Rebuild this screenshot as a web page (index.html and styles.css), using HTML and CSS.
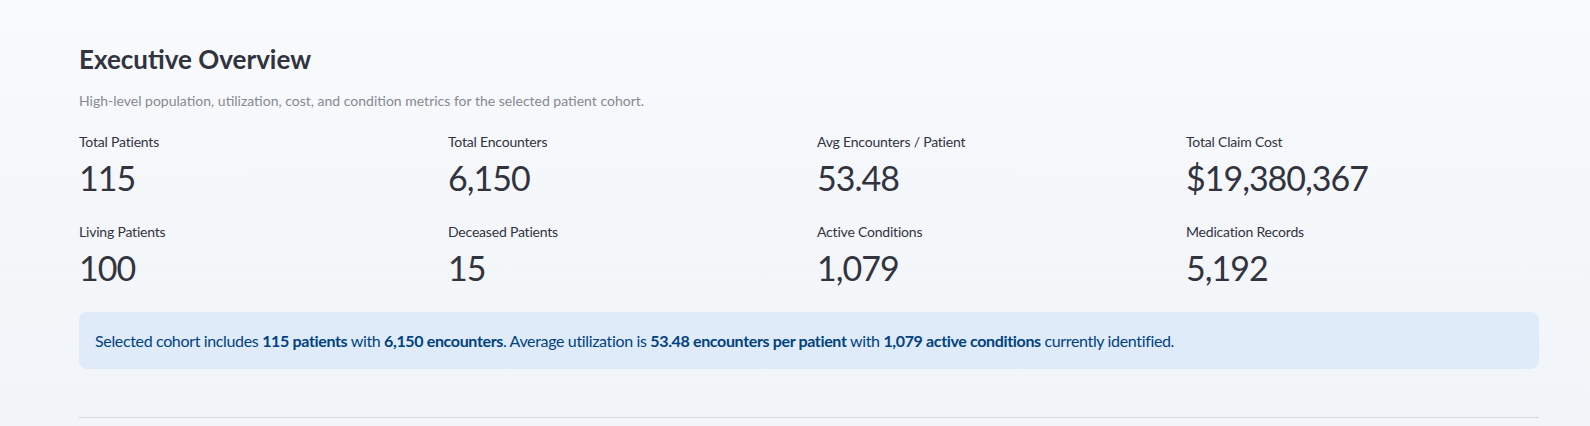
FILE: index.html
```html
<!DOCTYPE html>
<html lang="en">
<head>
  <meta charset="UTF-8">
  <meta name="viewport" content="width=device-width, initial-scale=1.0">
  <title>Executive Overview</title>
  <link rel="stylesheet" href="styles.css">
</head>
<body>

  <main class="main">
    <!-- Section header -->
    <h3 class="title">Executive Overview</h3>
    <p class="caption">High-level population, utilization, cost, and condition metrics for the selected patient cohort.</p>

    <!-- KPI grid -->
    <div class="metrics">
      <div class="metric">
        <div class="metric-label">Total Patients</div>
        <div class="metric-value">115</div>
      </div>
      <div class="metric">
        <div class="metric-label">Total Encounters</div>
        <div class="metric-value">6,150</div>
      </div>
      <div class="metric">
        <div class="metric-label">Avg Encounters / Patient</div>
        <div class="metric-value">53.48</div>
      </div>
      <div class="metric">
        <div class="metric-label">Total Claim Cost</div>
        <div class="metric-value">$19,380,367</div>
      </div>
      <div class="metric">
        <div class="metric-label">Living Patients</div>
        <div class="metric-value">100</div>
      </div>
      <div class="metric">
        <div class="metric-label">Deceased Patients</div>
        <div class="metric-value">15</div>
      </div>
      <div class="metric">
        <div class="metric-label">Active Conditions</div>
        <div class="metric-value">1,079</div>
      </div>
      <div class="metric">
        <div class="metric-label">Medication Records</div>
        <div class="metric-value">5,192</div>
      </div>
    </div>

    <!-- Summary -->
    <div class="alert">
      Selected cohort includes <b>115 patients</b> with <b>6,150 encounters</b>. Average utilization is <b>53.48 encounters per patient</b> with <b>1,079 active conditions</b> currently identified.
    </div>

    <hr class="divider">
  </main>

</body>
</html>
```

FILE: styles.css
```css
* {
  margin: 0;
  padding: 0;
  box-sizing: border-box;
}

body {
  font-family: 'Lato', 'Liberation Sans', sans-serif;
  background: linear-gradient(180deg, #f8fafc, #f1f4f8);
  color: #31333f;
  min-height: 426px;
}

.main {
  padding: 41px 51px 0 79px;
}

/* Header */
.title {
  font-size: 26px;
  font-weight: 700;
  line-height: 36px;
  color: #31333f;
}

.caption {
  margin-top: 14px;
  font-size: 14px;
  line-height: 20px;
  color: #868892;
}

/* KPI grid */
.metrics {
  display: grid;
  grid-template-columns: repeat(4, 1fr);
  column-gap: 16px;
  row-gap: 22px;
  margin-top: 21px;
}

.metric-label {
  font-size: 14px;
  line-height: 20px;
  letter-spacing: -0.2px;
}

.metric-value {
  margin-top: 4px;
  font-size: 34px;
  line-height: 44px;
  letter-spacing: -1px;
}

/* Summary box */
.alert {
  margin-top: 22px;
  padding: 17px 16px;
  background-color: #dfebf9;
  border-radius: 8px;
  color: #004280;
  font-size: 16px;
  line-height: 23px;
  letter-spacing: -0.35px;
}

.alert b {
  font-weight: 700;
}

.divider {
  margin-top: 48px;
  border: none;
  border-top: 1px solid #d3d7de;
}
```
